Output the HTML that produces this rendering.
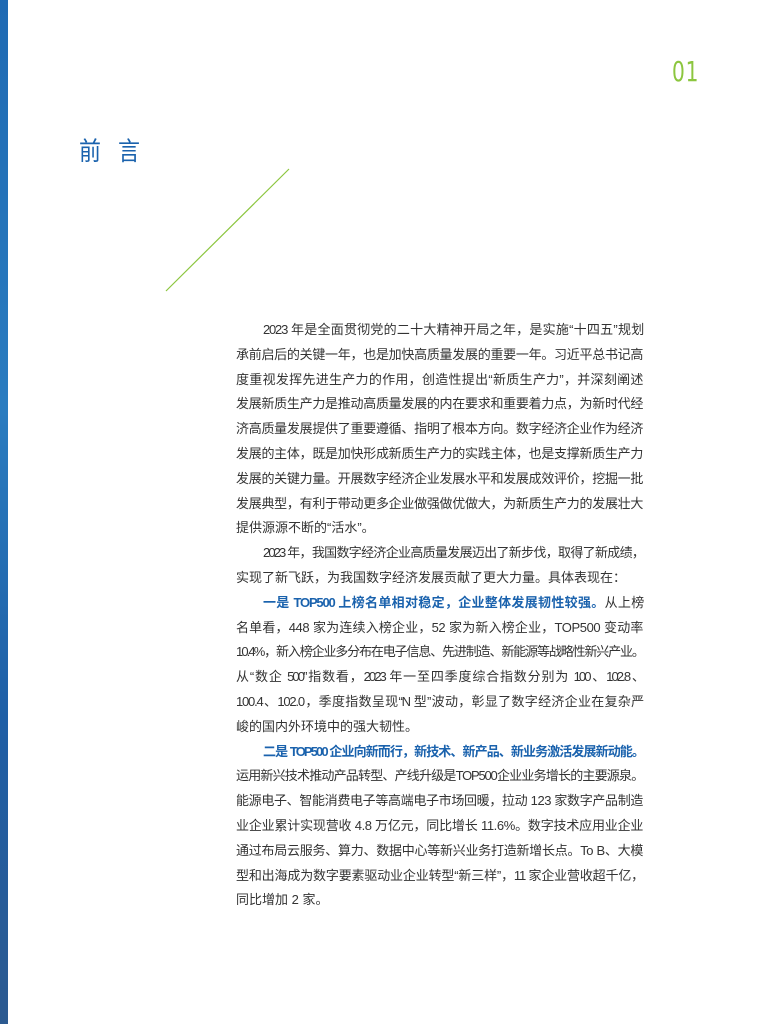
<!DOCTYPE html>
<html><head><meta charset="utf-8"><style>
body{margin:0;width:760px;height:1024px;background:#fff;position:relative;overflow:hidden;font-family:"Liberation Sans","Noto Sans CJK SC",sans-serif}
.bar{position:absolute;left:0;top:0;width:8px;height:1024px;background:linear-gradient(180deg,#1f6ab3 0%,#2a7cc0 40%,#1f5fa6 70%,#2c5a90 100%)}
.num{position:absolute;left:672px;top:55px;font-size:28px;color:#8cc63f;font-family:"DejaVu Sans Condensed","Liberation Sans Narrow",sans-serif;font-weight:200;transform:scaleX(.8);transform-origin:left;letter-spacing:1px}
.title{position:absolute;left:79px;top:131px;font-size:22px;color:#1a62ad;letter-spacing:17px;transform:scaleY(1.15);transform-origin:top left}
.txt{position:absolute;left:236px;top:318px;width:407px;font-size:13px;line-height:24.8px;color:#333}
.txt div{text-align:justify;text-align-last:justify;height:24.8px;letter-spacing:-0.4px}
.txt div.e{text-align-last:left;letter-spacing:0}
.i{padding-left:27px}
.txt div.t{letter-spacing:-1.2px}
.txt div.u{letter-spacing:-1.9px}
b{color:#1a62ad}
</style></head><body>
<div class="bar"></div>
<div class="num">01</div>
<div class="title">前言</div>
<svg style="position:absolute;left:0;top:0" width="760" height="400"><line x1="166" y1="291" x2="289" y2="169" stroke="#8cc63f" stroke-width="1.2"/></svg>
<div class="txt">
<div class="i t">2023 年是全面贯彻党的二十大精神开局之年，是实施“十四五”规划</div>
<div>承前启后的关键一年，也是加快高质量发展的重要一年。习近平总书记高</div>
<div>度重视发挥先进生产力的作用，创造性提出“新质生产力”，并深刻阐述</div>
<div>发展新质生产力是推动高质量发展的内在要求和重要着力点，为新时代经</div>
<div>济高质量发展提供了重要遵循、指明了根本方向。数字经济企业作为经济</div>
<div>发展的主体，既是加快形成新质生产力的实践主体，也是支撑新质生产力</div>
<div>发展的关键力量。开展数字经济企业发展水平和发展成效评价，挖掘一批</div>
<div>发展典型，有利于带动更多企业做强做优做大，为新质生产力的发展壮大</div>
<div class="e">提供源源不断的“活水”。</div>
<div class="i u">2023 年，我国数字经济企业高质量发展迈出了新步伐，取得了新成绩，</div>
<div class="e">实现了新飞跃，为我国数字经济发展贡献了更大力量。具体表现在：</div>
<div class="i t"><b>一是 TOP500 上榜名单相对稳定，企业整体发展韧性较强。</b>从上榜</div>
<div>名单看，448 家为连续入榜企业，52 家为新入榜企业，TOP500 变动率</div>
<div class="u">10.4%，新入榜企业多分布在电子信息、先进制造、新能源等战略性新兴产业。</div>
<div class="u">从“数企 500”指数看，2023 年一至四季度综合指数分别为 100、102.8、</div>
<div class="t">100.4、102.0，季度指数呈现“N 型”波动，彰显了数字经济企业在复杂严</div>
<div class="e">峻的国内外环境中的强大韧性。</div>
<div class="i u"><b>二是 TOP500 企业向新而行，新技术、新产品、新业务激活发展新动能。</b></div>
<div class="t">运用新兴技术推动产品转型、产线升级是TOP500企业业务增长的主要源泉。</div>
<div>能源电子、智能消费电子等高端电子市场回暖，拉动 123 家数字产品制造</div>
<div>业企业累计实现营收 4.8 万亿元，同比增长 11.6%。数字技术应用业企业</div>
<div>通过布局云服务、算力、数据中心等新兴业务打造新增长点。To B、大模</div>
<div class="t">型和出海成为数字要素驱动业企业转型“新三样”，11 家企业营收超千亿，</div>
<div class="e">同比增加 2 家。</div>
</div>
</body></html>
